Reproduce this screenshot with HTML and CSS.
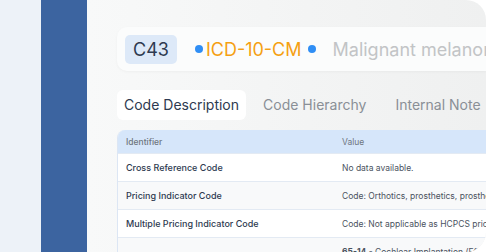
FILE: index.html
```html
<!DOCTYPE html>
<html lang="en">
<head>
    <meta charset="UTF-8">
    <meta name="viewport" content="width=device-width, initial-scale=1.0">
    <title>C43 - Malignant melanoma</title>
    <link rel="stylesheet" href="styles.css">
</head>
<body>
    <div class="frame">
        <div class="side-light"></div>
        <div class="side-blue"></div>

        <div class="main">
            <div class="code-head">
                <span class="code-badge">C43</span>
                <span class="dot"></span>
                <span class="code-system">ICD-10-CM</span>
                <span class="dot"></span>
                <span class="code-title">Malignant melanoma of skin</span>
            </div>

            <div class="tabs">
                <span class="tab active">Code Description</span>
                <span class="tab">Code Hierarchy</span>
                <span class="tab">Internal Note</span>
            </div>

            <table class="details">
                <thead>
                    <tr>
                        <th class="col-id">Identifier</th>
                        <th>Value</th>
                    </tr>
                </thead>
                <tbody>
                    <tr>
                        <td class="col-id">Cross Reference Code</td>
                        <td class="val">No data available.</td>
                    </tr>
                    <tr class="alt">
                        <td class="col-id">Pricing Indicator Code</td>
                        <td class="val">Code: Orthotics, prosthetics, prosthetic devices</td>
                    </tr>
                    <tr>
                        <td class="col-id">Multiple Pricing Indicator Code</td>
                        <td class="val">Code: Not applicable as HCPCS priced under one methodology</td>
                    </tr>
                    <tr class="alt">
                        <td class="col-id"></td>
                        <td class="val"><b>65-14</b> - Cochlear Implantation (Effective 1986)</td>
                    </tr>
                </tbody>
            </table>
        </div>
    </div>
</body>
</html>
```
FILE: styles.css
```css
body {
    margin: 0;
    background-color: #ffffff;
    font-family: Inter, "Noto Sans", sans-serif;
}
.frame {
    display: flex;
    width: 486px;
    height: 252px;
    border-radius: 0 20px 20px 0;
    overflow: hidden;
}
.side-light {
    width: 41px;
    flex-shrink: 0;
    background-color: #edf2f8;
}
.side-blue {
    width: 46px;
    flex-shrink: 0;
    background-color: #3c64a0;
}
.main {
    flex: 1;
    min-width: 0;
    padding: 27px 0 0 30px;
    background: linear-gradient(90deg, #f8f9f9, #eff0f0);
    overflow: hidden;
}
.code-head {
    display: flex;
    align-items: center;
    height: 44px;
    padding-left: 8px;
    background-color: #fbfcfc;
    border-radius: 10px 0 0 10px;
    white-space: nowrap;
    box-shadow: 0 1px 3px rgba(0, 0, 0, 0.04);
}
.code-head > span {
    flex-shrink: 0;
}
.code-badge {
    padding: 4px 8px;
    font-size: 18px;
    color: #2e3a50;
    background-color: #dde9f8;
    border-radius: 5px;
}
.dot {
    width: 8px;
    height: 8px;
    margin: 0 3px 0 18px;
    border-radius: 50%;
    background-color: #2f8ef5;
}
.code-system {
    font-size: 18px;
    color: #f5a012;
}
.code-system + .dot {
    margin-left: 6px;
}
.code-title {
    margin-left: 14px;
    font-size: 18px;
    color: #c2c4c6;
}
.tabs {
    display: flex;
    gap: 10px;
    margin-top: 19px;
    white-space: nowrap;
}
.tab {
    flex-shrink: 0;
    padding: 6px 7px;
    font-size: 14px;
    line-height: 18px;
    color: #8a8f96;
    border-radius: 6px;
}
.tab.active {
    color: #2e3a50;
    background-color: #ffffff;
}
.tab:last-child {
    margin-left: 5px;
}
.details {
    width: 480px;
    margin-top: 10px;
    border-collapse: separate;
    border-spacing: 0;
    white-space: nowrap;
    border-left: 1px solid #dce6f4;
    border-radius: 8px 0 0 0;
    overflow: hidden;
    table-layout: fixed;
}
.details th {
    height: 23px;
    padding: 0 8px;
    font-size: 8.5px;
    font-weight: 400;
    text-align: left;
    color: #6f7680;
    background-color: #d6e6fa;
}
.details td {
    height: 27px;
    padding: 0 8px;
    font-size: 9px;
    color: #2e3a50;
    background-color: #ffffff;
    border-top: 1px solid #e3eaf3;
    overflow: hidden;
}
.details .alt td {
    background-color: #f8f9fa;
}
.details .col-id {
    width: 200px;
    font-weight: 500;
}
.details td.val {
    font-size: 8.5px;
    color: #4a525e;
}
```
